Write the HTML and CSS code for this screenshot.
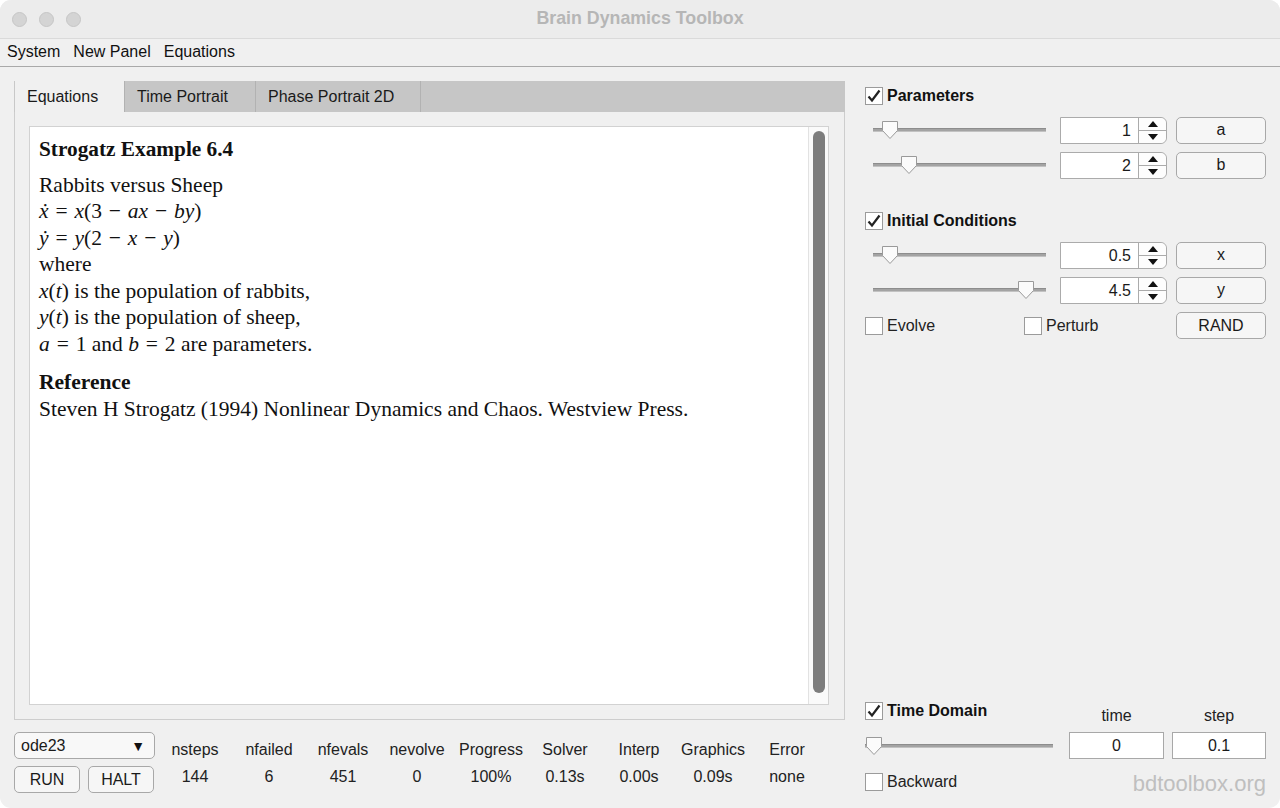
FILE: index.html
```html
<!DOCTYPE html>
<html>
<head>
<meta charset="utf-8">
<link rel="stylesheet" href="styles.css">
</head>
<body>
<div class="window">
  <div class="titlebar">
    <div class="lights"><span class="light"></span><span class="light"></span><span class="light"></span></div>
    <div class="title">Brain Dynamics Toolbox</div>
  </div>
  <div class="menubar">
    <span class="menu">System</span><span class="menu">New Panel</span><span class="menu">Equations</span>
  </div>
  <div class="main">
    <div class="leftcol">
      <div class="tabs">
        <div class="tab active">Equations</div>
        <div class="tab t2">Time Portrait</div>
        <div class="tab t3">Phase Portrait 2D</div>
      </div>
      <div class="tabpanel">
        <div class="doc">
          <div class="doctext">
            <div class="h1">Strogatz Example 6.4</div>
            <div class="para">
              <div>Rabbits versus Sheep</div>
              <div class="math"><i>ẋ</i> = <i>x</i>(3 − <i>ax</i> − <i>by</i>)</div>
              <div class="math"><i>ẏ</i> = <i>y</i>(2 − <i>x</i> − <i>y</i>)</div>
              <div>where</div>
              <div><i>x</i>(<i>t</i>) is the population of rabbits,</div>
              <div><i>y</i>(<i>t</i>) is the population of sheep,</div>
              <div><span class="math"><i>a</i> = 1</span> and <span class="math"><i>b</i> = 2</span> are parameters.</div>
            </div>
            <div class="h2">Reference</div>
            <div>Steven H Strogatz (1994) Nonlinear Dynamics and Chaos. Westview Press.</div>
          </div>
          <div class="scrolltrack"><div class="thumb"></div></div>
        </div>
      </div>
      <div class="bottombar">
        <div class="controls">
          <div class="dropdown"><span>ode23</span><span class="arrow">▼</span></div>
          <div class="btnrow"><div class="btn small">RUN</div><div class="btn small">HALT</div></div>
        </div>
        <div class="stats">
          <div class="stat"><div class="lbl">nsteps</div><div class="val">144</div></div>
          <div class="stat"><div class="lbl">nfailed</div><div class="val">6</div></div>
          <div class="stat"><div class="lbl">nfevals</div><div class="val">451</div></div>
          <div class="stat"><div class="lbl">nevolve</div><div class="val">0</div></div>
          <div class="stat"><div class="lbl">Progress</div><div class="val">100%</div></div>
          <div class="stat"><div class="lbl">Solver</div><div class="val">0.13s</div></div>
          <div class="stat"><div class="lbl">Interp</div><div class="val">0.00s</div></div>
          <div class="stat"><div class="lbl">Graphics</div><div class="val">0.09s</div></div>
          <div class="stat"><div class="lbl">Error</div><div class="val">none</div></div>
        </div>
      </div>
    </div>
    <div class="rightcol">
      <div class="section">
        <div class="heading"><span class="cb"><svg width="16" height="16" viewBox="0 0 16 16"><path d="M2.5 8.5l3.5 4 7.5-10" fill="none" stroke="#222" stroke-width="2.2"/></svg></span><b>Parameters</b></div>
        <div class="prow first">
          <div class="slider"><div class="track"></div><svg class="knob" style="left:8px" width="18" height="20" viewBox="0 0 18 20"><path d="M1.5 1.5h15v9l-7.5 8-7.5-8z" fill="#fbfbfb" stroke="#9a9a9a"/></svg></div>
          <div class="spin"><div class="spinval">1</div><div class="spinbtn"><span class="up"></span><span class="dn"></span></div></div>
          <div class="btn">a</div>
        </div>
        <div class="prow">
          <div class="slider"><div class="track"></div><svg class="knob" style="left:27px" width="18" height="20" viewBox="0 0 18 20"><path d="M1.5 1.5h15v9l-7.5 8-7.5-8z" fill="#fbfbfb" stroke="#9a9a9a"/></svg></div>
          <div class="spin"><div class="spinval">2</div><div class="spinbtn"><span class="up"></span><span class="dn"></span></div></div>
          <div class="btn">b</div>
        </div>
      </div>
      <div class="section ic">
        <div class="heading"><span class="cb"><svg width="16" height="16" viewBox="0 0 16 16"><path d="M2.5 8.5l3.5 4 7.5-10" fill="none" stroke="#222" stroke-width="2.2"/></svg></span><b>Initial Conditions</b></div>
        <div class="prow first">
          <div class="slider"><div class="track"></div><svg class="knob" style="left:8px" width="18" height="20" viewBox="0 0 18 20"><path d="M1.5 1.5h15v9l-7.5 8-7.5-8z" fill="#fbfbfb" stroke="#9a9a9a"/></svg></div>
          <div class="spin"><div class="spinval">0.5</div><div class="spinbtn"><span class="up"></span><span class="dn"></span></div></div>
          <div class="btn">x</div>
        </div>
        <div class="prow">
          <div class="slider"><div class="track"></div><svg class="knob" style="left:144px" width="18" height="20" viewBox="0 0 18 20"><path d="M1.5 1.5h15v9l-7.5 8-7.5-8z" fill="#fbfbfb" stroke="#9a9a9a"/></svg></div>
          <div class="spin"><div class="spinval">4.5</div><div class="spinbtn"><span class="up"></span><span class="dn"></span></div></div>
          <div class="btn">y</div>
        </div>
        <div class="optrow">
          <div class="opt"><span class="cb"></span>Evolve</div>
          <div class="opt perturb"><span class="cb"></span>Perturb</div>
          <div class="btn">RAND</div>
        </div>
      </div>
      <div class="timedomain">
        <div class="tdrow">
          <div class="heading tdhead"><span class="cb"><svg width="16" height="16" viewBox="0 0 16 16"><path d="M2.5 8.5l3.5 4 7.5-10" fill="none" stroke="#222" stroke-width="2.2"/></svg></span><b>Time Domain</b></div>
          <div class="tlabel">time</div>
          <div class="tlabel second">step</div>
        </div>
        <div class="tdrow mid">
          <div class="slider tslider"><div class="track"></div><svg class="knob" style="left:0px" width="18" height="20" viewBox="0 0 18 20"><path d="M1.5 1.5h15v9l-7.5 8-7.5-8z" fill="#fbfbfb" stroke="#9a9a9a"/></svg></div>
          <div class="tfield">0</div>
          <div class="tfield second">0.1</div>
        </div>
        <div class="tdrow last">
          <div class="opt"><span class="cb"></span>Backward</div>
          <div class="url">bdtoolbox.org</div>
        </div>
      </div>
    </div>
  </div>
</div>
</body>
</html>
```
FILE: styles.css
```css
* { box-sizing: border-box; }
html, body { margin: 0; padding: 0; background: #ffffff; }
body { font-family: "Liberation Sans", Arial, sans-serif; font-size: 16px; color: #1a1a1a; }

.window {
  width: 1280px; height: 808px;
  background: #f0f0f0;
  border-radius: 11px;
  overflow: hidden;
  display: flex; flex-direction: column;
}

.titlebar {
  height: 39px; flex: none;
  background: #ececec;
  border-bottom: 1px solid #dadada;
  display: flex; align-items: center; position: relative;
}
.lights { display: flex; gap: 12px; padding-left: 12px; }
.light { width: 15px; height: 15px; border-radius: 50%; background: #d4d4d4; border: 1px solid #c6c6c6; }
.title {
  position: absolute; left: 0; right: 0; top: 0; height: 37px;
  display: flex; align-items: center; justify-content: center;
  font-weight: bold; font-size: 17.8px; color: #b6b6b6;
}

.menubar {
  height: 28px; flex: none;
  border-bottom: 1px solid #a9a9a9;
  display: flex; align-items: center; padding: 0 0 1px 7px; gap: 13px;
  background: #f0f0f0;
}
.menu { font-size: 16px; color: #111; }

.main { flex: 1; display: flex; min-height: 0; }

.leftcol { width: 865px; flex: none; padding: 14px 0 0 14px; display: flex; flex-direction: column; }

.tabs {
  width: 831px; height: 31px;
  background: #c6c6c6;
  display: flex;
}
.tab {
  height: 31px; display: flex; align-items: center;
  padding-left: 12px; font-size: 16px; color: #1a1a1a;
  border-right: 1px solid #b2b2b2;
}
.tab.active { width: 111px; background: #f0f0f0; border-left: 1px solid #c8c8c8; padding-left: 12px; }
.tab.t2 { width: 131px; }
.tab.t3 { width: 165px; }

.tabpanel {
  width: 831px; height: 608px;
  border: 1px solid #cdcdcd; border-top: none;
  padding: 14px 15px 14px 14px;
  background: #f0f0f0;
}
.doc {
  height: 100%;
  background: #ffffff;
  border: 1px solid #d2d2d2;
  display: flex;
}
.doctext {
  flex: 1;
  padding: 9px 0 0 9px;
  font-family: "Liberation Serif", "Times New Roman", serif;
  font-size: 21.5px; line-height: 26.5px; color: #111;
}
.doctext i { font-style: italic; }
.math { word-spacing: 1.5px; }
.h1 { font-weight: bold; font-size: 21.3px; margin-bottom: 9px; }
.h2 { font-weight: bold; margin-top: 12px; }
.scrolltrack {
  width: 20px; flex: none;
  border-left: 1px solid #e2e2e2;
  background: #fafafa;
  padding: 4px 0 11px 4px;
}
.thumb { width: 12px; height: 100%; background: #7d7d7d; border-radius: 6px; }

.bottombar { display: flex; padding-top: 12px; }
.controls { width: 144px; flex: none; display: flex; flex-direction: column; gap: 7px; }
.dropdown {
  width: 141px; height: 27px;
  border: 1px solid #a8a8a8; border-radius: 5px; background: #f8f8f8;
  display: flex; align-items: center; justify-content: space-between;
  padding: 0 9px 0 6px; font-size: 16px;
}
.arrow { font-size: 14px; color: #111; }
.btnrow { display: flex; gap: 8px; }
.btn {
  height: 27px; width: 90px;
  border: 1px solid #a8a8a8; border-radius: 5px; background: #f6f6f6;
  display: flex; align-items: center; justify-content: center;
  font-size: 16px; color: #1a1a1a;
}
.btn.small { width: 66px; }

.stats { display: flex; }
.stat { width: 74px; text-align: center; font-size: 16px; color: #222; }
.lbl { height: 19px; margin-top: 9px; }
.val { margin-top: 8px; }

.rightcol { width: 415px; flex: none; min-width: 0; padding: 20px 14px 0 0; display: flex; flex-direction: column; }
.heading { display: flex; align-items: center; gap: 4px; font-size: 16px; height: 18px; }
.heading b { font-weight: bold; color: #111; }
.cb {
  width: 18px; height: 18px; flex: none;
  background: #ffffff; border: 1px solid #9b9b9b;
  display: inline-flex; align-items: center; justify-content: center;
}
.prow { display: flex; align-items: center; height: 26px; margin-top: 12px; }
.prow + .prow { margin-top: 9px; }
.slider { width: 173px; height: 26px; margin-left: 8px; position: relative; flex: none; }
.track {
  position: absolute; left: 0; right: 0; top: 11px; height: 4px;
  background: #a3a3a3; border-top: 1px solid #8d8d8d; border-bottom: 1px solid #c2c2c2;
}
.knob { position: absolute; top: 3px; }
.spin {
  width: 107px; height: 27px; margin-left: 14px; flex: none;
  display: flex; background: #fff;
  border: 1px solid #ababab; border-radius: 0 6px 6px 0;
}
.spinval { flex: 1; text-align: right; padding-right: 7px; line-height: 25px; font-size: 16px; }
.spinbtn {
  width: 28px; border-left: 1px solid #ababab;
  display: flex; flex-direction: column; background: #fdfdfd; border-radius: 0 6px 6px 0;
}
.spinbtn span { flex: 1; display: flex; align-items: center; justify-content: center; }
.spinbtn .up { border-bottom: 1px solid #ababab; }
.spinbtn .up::after { content: ""; border-left: 5px solid transparent; border-right: 5px solid transparent; border-bottom: 6px solid #111; }
.spinbtn .dn::after { content: ""; border-left: 5px solid transparent; border-right: 5px solid transparent; border-top: 6px solid #111; }
.prow .btn { margin-left: 9px; }

.section.ic { margin-top: 34px; }
.optrow { display: flex; align-items: center; margin-top: 9px; height: 27px; }
.opt { display: flex; align-items: center; gap: 4px; font-size: 16px; color: #222; }
.optrow .opt { width: 159px; }
.optrow .opt.perturb { width: 152px; }

.timedomain { margin-top: auto; padding-bottom: 11px; }
.tdrow { display: flex; align-items: center; }
.tdhead { width: 204px; flex: none; }
.tlabel { width: 95px; flex: none; text-align: center; font-size: 16px; color: #222; padding-top: 10px; }
.tlabel.second { width: 94px; margin-left: 8px; }
.tdrow.mid { margin-top: 7px; height: 27px; }
.tslider { width: 188px; margin-left: 0; }
.tfield {
  width: 95px; height: 27px; margin-left: 16px; flex: none;
  background: #fff; border: 1px solid #a8a8a8;
  display: flex; align-items: center; justify-content: center; font-size: 16px;
}
.tfield.second { width: 94px; margin-left: 8px; }
.tdrow.last { justify-content: space-between; margin-top: 8px; }
.url { font-size: 22px; color: #bfbfbf; padding-top: 4px; }
```
